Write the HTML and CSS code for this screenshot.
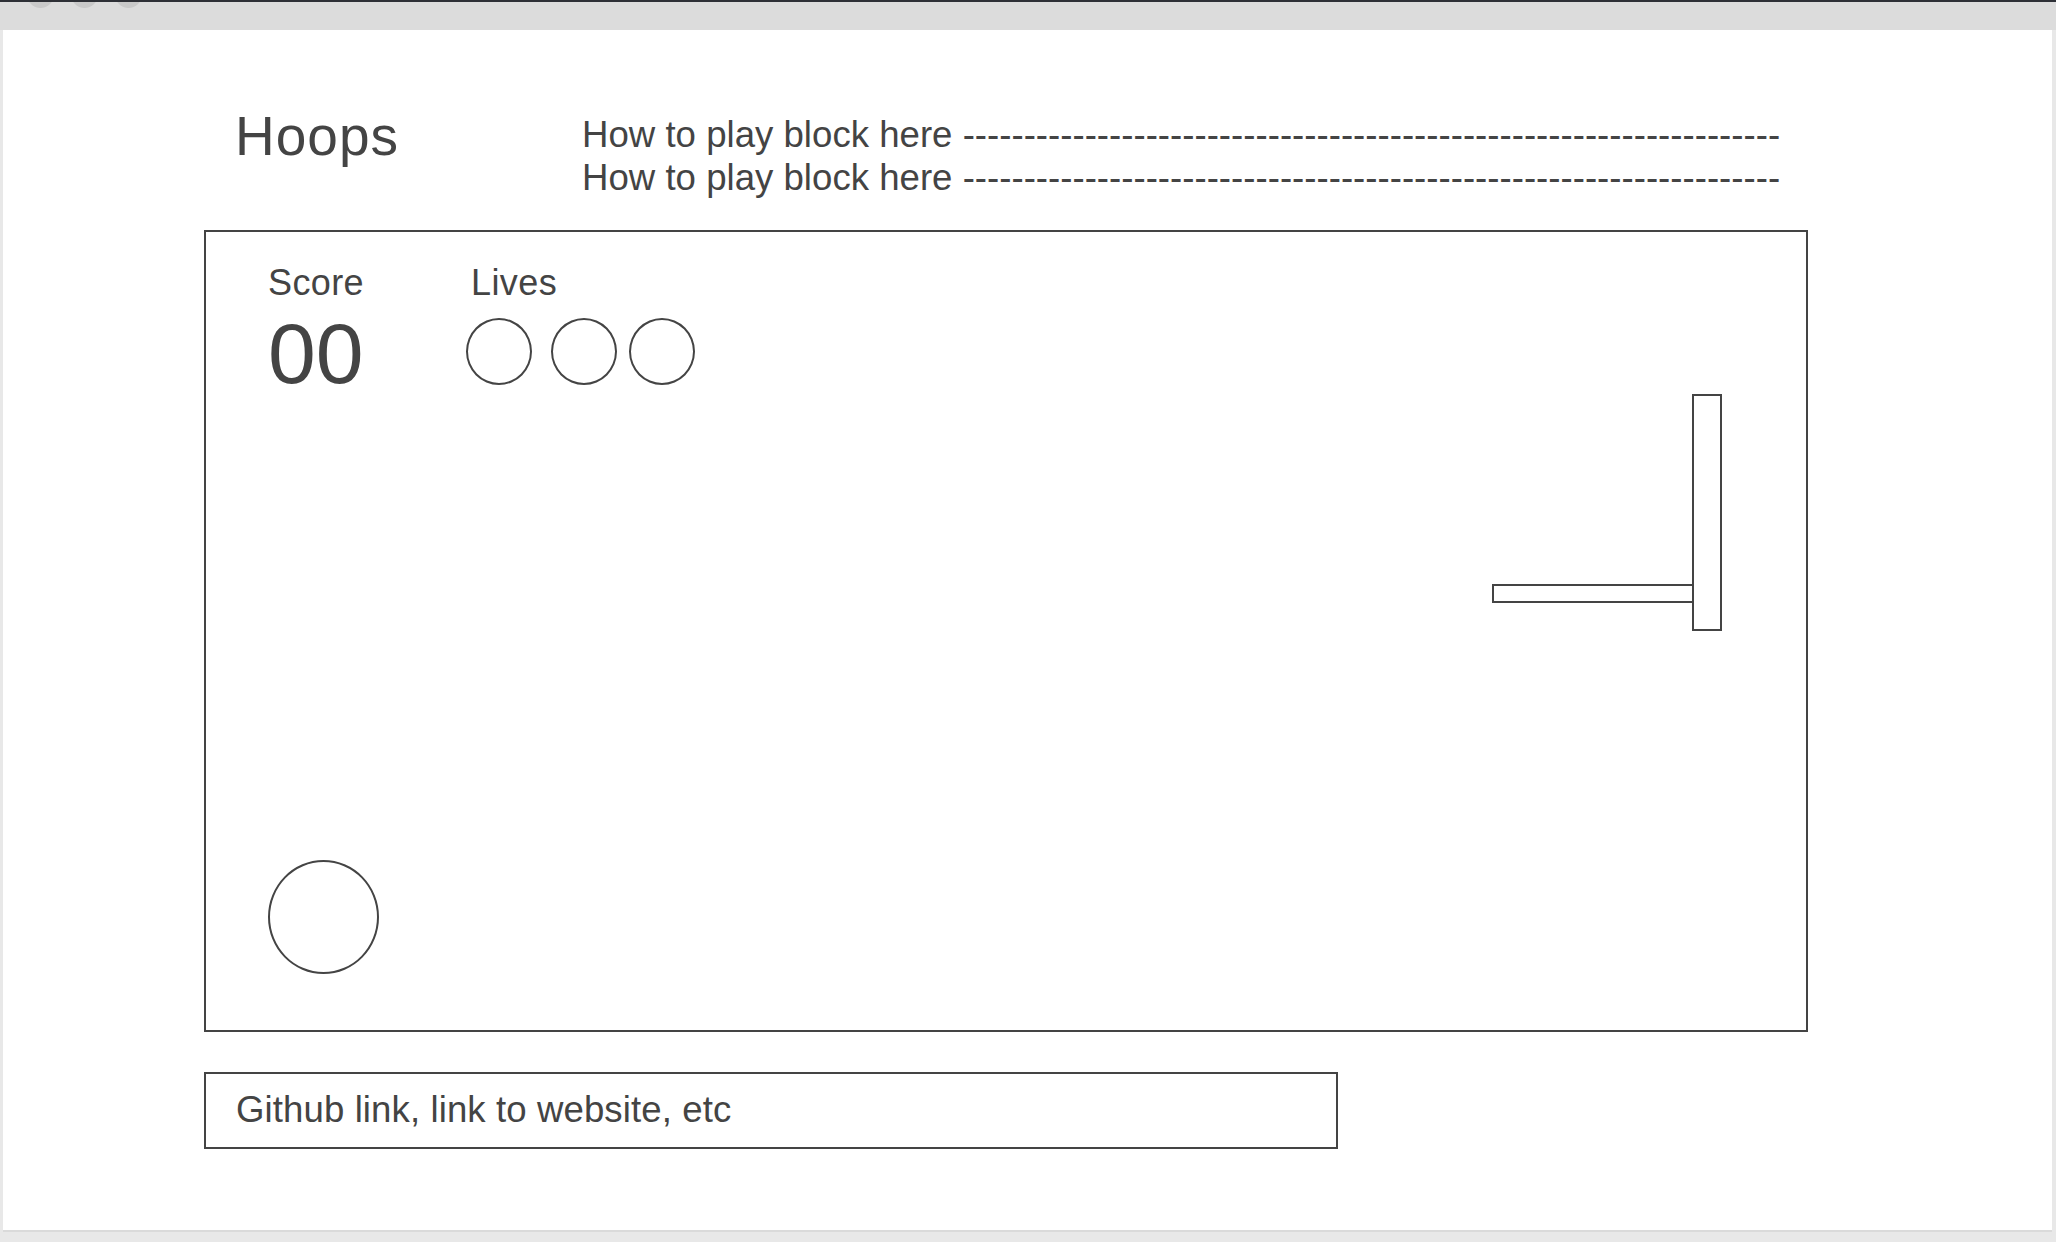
FILE: index.html
```html
<!DOCTYPE html>
<html lang="en">
<head>
<meta charset="utf-8">
<title>Hoops</title>
<link rel="stylesheet" href="styles.css">
</head>
<body>
<div class="chrome">
  <div class="dots"><span class="dot"></span><span class="dot"></span><span class="dot"></span></div>
</div>
<div class="window">
  <div class="page">
    <header class="header">
      <h1 class="title">Hoops</h1>
      <div class="howto">
        <p class="howto-line">How to play block here -------------------------------------------------------------------</p>
        <p class="howto-line">How to play block here -------------------------------------------------------------------</p>
      </div>
    </header>
    <section class="game">
      <div class="stats">
        <div class="score">
          <div class="label">Score</div>
          <div class="score-value">00</div>
        </div>
        <div class="lives">
          <div class="label lives-label">Lives</div>
          <div class="life-row">
            <span class="life"></span>
            <span class="life life-2"></span>
            <span class="life life-3"></span>
          </div>
        </div>
      </div>
      <div class="rim"></div>
      <div class="backboard"></div>
      <div class="ball"></div>
    </section>
    <footer class="footer">Github link, link to website, etc</footer>
  </div>
</div>
</body>
</html>
```
FILE: styles.css
```css
html, body {
  margin: 0;
  padding: 0;
}
body {
  background: #e8e8e8;
  font-family: "Liberation Sans", Arial, sans-serif;
  color: #444;
  width: 2056px;
  height: 1242px;
  overflow: hidden;
}
.chrome {
  box-sizing: border-box;
  height: 30px;
  background: #dcdcdc;
  border-top: 2px solid #2e3036;
  overflow: hidden;
}
.dots {
  display: flex;
  gap: 17px;
  margin-top: -21px;
  padding-left: 27px;
}
.dot {
  width: 27px;
  height: 27px;
  border-radius: 50%;
  background: #c9c9c9;
}
.window {
  box-sizing: border-box;
  margin-left: 3px;
  width: 2049px;
  height: 1202px;
  background: #fff;
  border-bottom: 2px solid #dadada;
}
.page {
  padding: 75px 0 0 201px;
}
.header {
  display: flex;
  align-items: flex-start;
  height: 125px;
}
.title {
  flex: 0 0 347px;
  margin: 0 0 0 31px;
  font-size: 55px;
  line-height: 1.15;
  font-weight: normal;
  letter-spacing: 1px;
}
.howto {
  margin-top: 8px;
}
.howto-line {
  margin: 0;
  font-size: 36.6px;
  line-height: 43.3px;
  letter-spacing: 0.02px;
  white-space: nowrap;
}
.game {
  position: relative;
  box-sizing: border-box;
  width: 1604px;
  height: 802px;
  border: 2px solid #444;
}
.stats {
  display: flex;
  padding: 33px 0 0 62px;
}
.score {
  flex: 0 0 199px;
}
.label {
  font-size: 36px;
  line-height: 36px;
  letter-spacing: 0.4px;
}
.score-value {
  margin-top: 9px;
  font-size: 86px;
  line-height: 86px;
}
.lives-label {
  margin-left: 4px;
}
.life-row {
  display: flex;
  margin-top: 17px;
  margin-left: -1px;
}
.life {
  box-sizing: border-box;
  width: 66px;
  height: 67px;
  border: 2px solid #444;
  border-radius: 50%;
}
.life-2 {
  margin-left: 19px;
}
.life-3 {
  margin-left: 12px;
}
.rim {
  position: absolute;
  left: 1286px;
  top: 352px;
  width: 202px;
  height: 19px;
  box-sizing: border-box;
  border: 2px solid #444;
  background: #fff;
}
.backboard {
  position: absolute;
  left: 1486px;
  top: 162px;
  width: 30px;
  height: 237px;
  box-sizing: border-box;
  border: 2px solid #444;
  background: #fff;
}
.ball {
  position: absolute;
  left: 62px;
  top: 628px;
  width: 111px;
  height: 114px;
  box-sizing: border-box;
  border: 2px solid #444;
  border-radius: 50%;
}
.footer {
  display: flex;
  align-items: center;
  box-sizing: border-box;
  margin-top: 40px;
  width: 1134px;
  height: 77px;
  padding: 0 0 2px 30px;
  border: 2px solid #444;
  font-size: 36.6px;
  letter-spacing: 0.1px;
}
```
